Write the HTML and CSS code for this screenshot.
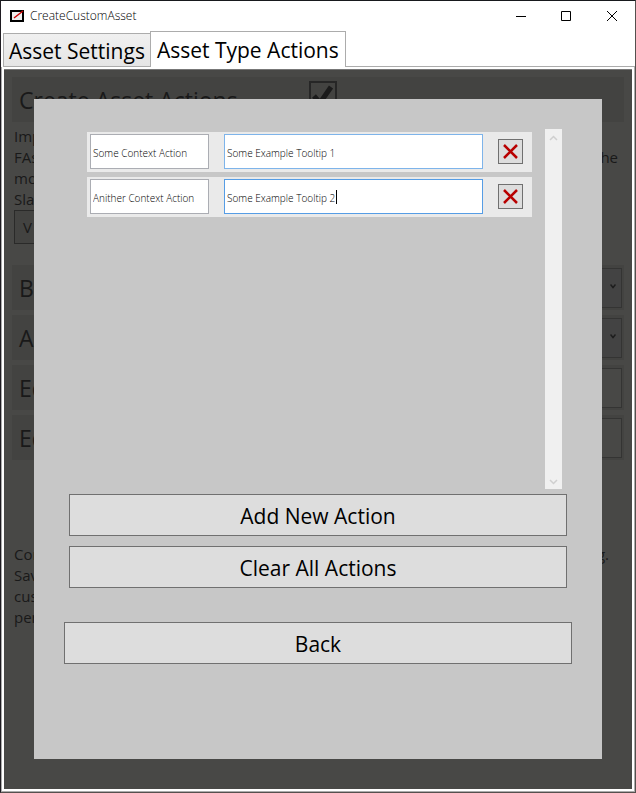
FILE: index.html
```html
<!DOCTYPE html>
<html lang="en">
<head>
<meta charset="utf-8">
<title>CreateCustomAsset</title>
<link rel="stylesheet" href="styles.css">
</head>
<body>
<div class="window">
  <header class="titlebar">
    <svg class="app-icon" width="14" height="12" viewBox="0 0 14 12" aria-hidden="true">
      <rect x="1" y="1" width="12" height="10" fill="#eee" stroke="#000" stroke-width="2"/>
      <path d="M4 8L13 1" stroke="#c00" stroke-width="1.4"/>
    </svg>
    <h1 class="title">CreateCustomAsset</h1>
    <div class="window-buttons">
      <button class="win-btn" aria-label="Minimize"><svg width="10" height="10" viewBox="0 0 10 10"><path d="M0 5.5H10"/></svg></button>
      <button class="win-btn" aria-label="Maximize"><svg width="10" height="10" viewBox="0 0 10 10"><path d="M.5.5H9.5V9.5H.5Z"/></svg></button>
      <button class="win-btn" aria-label="Close"><svg width="10" height="10" viewBox="0 0 10 10"><path d="M0 0L10 10M10 0L0 10"/></svg></button>
    </div>
  </header>
  <nav class="tabs">
    <button class="tab">Asset Settings</button>
    <button class="tab active">Asset Type Actions</button>
    <span class="tab-line"></span>
  </nav>
  <main class="content">
    <section class="page">
      <label class="field heading"><span class="check-label">Create Asset Actions</span>
        <span class="check"><input type="checkbox" checked><svg width="28" height="28" viewBox="0 0 28 28"><path d="M5 15L11 22L22 6"/></svg></span>
      </label>
      <div class="note">
        <p>Imp</p>
        <p class="split"><span>FAs</span><span>the</span></p>
        <p>mo</p>
        <p>Sla</p>
      </div>
      <button class="view-btn">V</button>
      <div class="fields">
        <label class="field"><span>B</span><select><option></option></select><svg class="arrow" width="6" height="5" viewBox="0 0 6 5"><path d="M.5.5L3 3.5L5.5.5"/></svg></label>
        <label class="field"><span>A</span><select><option></option></select><svg class="arrow" width="6" height="5" viewBox="0 0 6 5"><path d="M.5.5L3 3.5L5.5.5"/></svg></label>
        <label class="field"><span>Ed</span><input type="text"></label>
        <label class="field"><span>Ed</span><input type="text"></label>
      </div>
      <div class="note footer-note">
        <p class="split"><span>Con</span><span>g.</span></p>
        <p>Sav</p>
        <p>cus</p>
        <p>per</p>
      </div>
    </section>
    <section class="dialog">
      <div class="list">
        <div class="rows">
          <div class="row">
            <input class="name" type="text" aria-label="Action name" value="Some Context Action">
            <div class="tip hover"><input type="text" aria-label="Tooltip" value="Some Example Tooltip 1"></div>
            <button class="remove" aria-label="Remove"><svg width="15" height="15" viewBox="0 0 15 15"><path d="M1 1L14 14M14 1L1 14"/></svg></button>
          </div>
          <div class="row">
            <input class="name" type="text" aria-label="Action name" value="Anither Context Action">
            <div class="tip focus"><input type="text" aria-label="Tooltip" value="Some Example Tooltip 2"><span class="caret"></span></div>
            <button class="remove" aria-label="Remove"><svg width="15" height="15" viewBox="0 0 15 15"><path d="M1 1L14 14M14 1L1 14"/></svg></button>
          </div>
        </div>
        <div class="scrollbar">
          <svg width="9" height="6" viewBox="0 0 9 6"><path d="M1 5L4.500 1.500L8 5"/></svg>
          <svg width="9" height="6" viewBox="0 0 9 6"><path d="M1 1L4.500 4.500L8 1"/></svg>
        </div>
      </div>
      <div class="actions">
        <button class="big">Add New Action</button>
        <button class="big">Clear All Actions</button>
      </div>
      <button class="big back">Back</button>
    </section>
  </main>
</div>
</body>
</html>
```
FILE: styles.css
```css
* { box-sizing: border-box; }

body {
  margin: 0;
  font-family: "Open Sans", "Noto Sans", sans-serif;
  color: #000;
}

button, input, select { font: inherit; color: inherit; margin: 0; border-radius: 0; }
button { padding: 0; }

.window {
  min-height: 100vh;
  display: flex;
  flex-direction: column;
  background: #fff;
  border: 1px solid #55504e;
  border-top-color: #17191d;
  border-left-color: #1f1c22;
}

.titlebar {
  display: flex;
  align-items: center;
  height: 30px;
  padding-left: 9px;
}
.title { margin: 0 0 0 6px; font-size: 12px; line-height: 16px; font-weight: 300; }
.window-buttons { display: flex; margin-left: auto; }
.win-btn {
  width: 45px;
  height: 28px;
  display: grid;
  place-items: center;
  border: 0;
  background: none;
}
.win-btn:last-child { width: 47px; }
.win-btn path { fill: none; stroke: #000; }

.tabs { display: flex; align-items: flex-end; height: 36px; padding-left: 2px; }
.tab {
  height: 34px;
  padding: 2px 5px 0;
  font-size: 21px;
  line-height: 30px;
  border: 1px solid #acacac;
  background: linear-gradient(#f0f0f0, #e5e5e5);
  white-space: nowrap;
}
.tab.active { height: 36px; padding: 1px 6px 0; margin-left: -1px; background: #fff; border-bottom: 0; }
.tab-line { flex: 1; border-bottom: 1px solid #acacac; }

.content {
  flex: 1;
  display: grid;
  padding: 2px;
  border: 1px solid #acacac;
  border-top: 0;
}
.page, .dialog { grid-area: 1 / 1; }

.page {
  background: #484846;
  border-top: 1px solid #777;
  padding: 7px 8px;
  color: #191919;
}
.field {
  display: flex;
  align-items: center;
  height: 45px;
  padding: 3px 2px 2px 7px;
  background: #434341;
  font-size: 23px;
  line-height: 30px;
}
.check-label { flex: 0 0 290px; }
.check { display: grid; width: 28px; height: 28px; margin-top: -10px; }
.check > * { grid-area: 1 / 1; }
.check input { appearance: none; border: 2px solid #262626; }
.check path { fill: none; stroke: #1b1b1b; stroke-width: 5; }
.note { padding: 4px 6px 0 2px; font-size: 15px; line-height: 21px; }
.note p { margin: 0; }
.split { display: flex; justify-content: space-between; }
.view-btn {
  display: block;
  width: 120px;
  height: 34px;
  margin: 0 2px;
  padding-left: 8px;
  text-align: left;
  font-size: 15px;
  background: #434341;
  border: 1px solid #2a2a29;
}
.fields { display: grid; gap: 5px; margin-top: 21px; }
.field > select, .field > input {
  appearance: none;
  width: 50%;
  height: 40px;
  margin-left: auto;
  border: 1px solid #343433;
  background: #484846;
}
.field > select { background: #434343; }
.arrow { margin: -4px 6px 0 -12px; }
.arrow path { fill: none; stroke: #1d1d1d; stroke-width: 1.5; }
.footer-note { margin-top: 80px; padding-right: 15px; }

.dialog {
  margin: 30px;
  padding: 30px;
  background: #c7c7c7;
  display: flex;
  flex-direction: column;
}
.list { display: flex; height: 360px; margin: 0 10px 0 23px; gap: 13px; }
.rows { flex: 1; min-width: 0; display: flex; flex-direction: column; gap: 5px; padding-top: 3px; }
.row {
  display: grid;
  grid-template-columns: 119fr 259fr 25px;
  column-gap: 15px;
  align-items: center;
  height: 40px;
  padding: 0 9px 1px 3px;
  background: #eaeaea;
}
.row input {
  width: 100%;
  height: 35px;
  padding: 2px 2px 0;
  font-size: 10px;
  font-weight: 300;
  border: 1px solid #abadb3;
  background: #fff;
}
.tip { position: relative; display: flex; }
.tip.hover input { border-color: #7eb4ea; }
.tip.focus input { border-color: #569de5; }
.caret { position: absolute; left: 112px; top: 11px; width: 1px; height: 14px; background: #000; }
.remove {
  width: 25px;
  height: 25px;
  display: grid;
  place-items: center;
  border: 1px solid #707070;
  background: #ddd;
}
.remove path { fill: none; stroke: #b80000; stroke-width: 2.5; }
.scrollbar {
  width: 17px;
  display: flex;
  flex-direction: column;
  justify-content: space-between;
  align-items: center;
  padding: 6px 0 4px;
  background: #f0f0f0;
}
.scrollbar path { fill: none; stroke: #cfcfcf; stroke-width: 1.5; }
.actions { display: grid; gap: 10px; margin: 5px 5px 0; }
.big {
  height: 42px;
  padding-top: 2px;
  font-size: 21px;
  line-height: 30px;
  border: 1px solid #707070;
  background: #ddd;
}
.back { margin-top: 34px; }
```
